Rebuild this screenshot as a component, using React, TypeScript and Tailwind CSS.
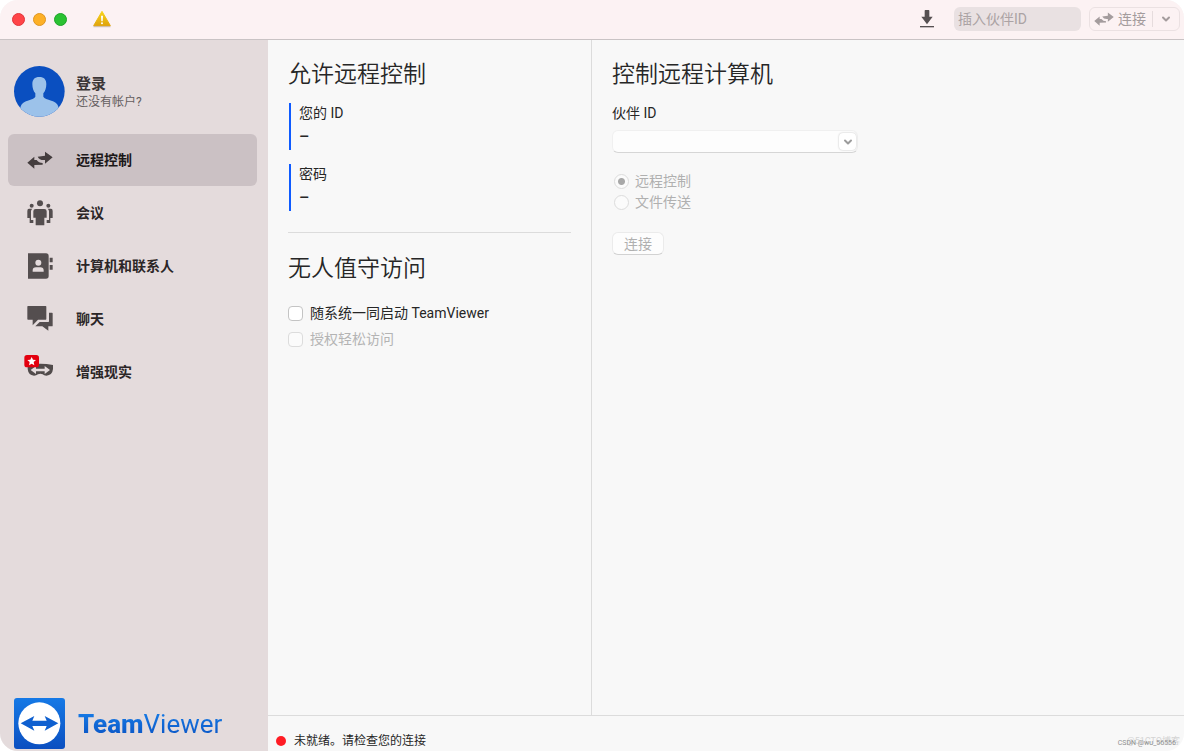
// Main window of the remote control client: title bar with quick connect,
// navigation sidebar, the two control panels and the status line.

import { useState } from 'react';
import type { ReactNode } from 'react';
import { ChevronDown } from 'lucide-react';

function ArrowsIcon({ className }: { className?: string }) {
  return (
    <svg viewBox="0 0 78 54" fill="currentColor" className={className} aria-hidden="true">
      <path d="M1 35 22 17v10h7q6 9 18 9v5l-25 1v11z" />
      <path d="M77 19 54 2v12l-22 3q6 12 22 10v11z" />
    </svg>
  );
}

function MeetingIcon() {
  return (
    <svg viewBox="0 0 78 78" fill="currentColor" className="size-6.5" aria-hidden="true">
      <circle cx="39" cy="10" r="9" />
      <circle cx="14" cy="17" r="6" />
      <circle cx="64" cy="17" r="6" />
      <path d="M26 27h26q7 0 7 7v19h-7v21q0 2-2 2H28q-2 0-2-2V53h-7V34q0-7 7-7z" />
      <path d="M6 26h10q-4 3-4 8v26h7v9H8V54H1V33q0-7 5-7zM72 26H62q4 3 4 8v26h-7v9h11V54h7V33q0-7-5-7z" />
    </svg>
  );
}

function ContactsIcon() {
  return (
    <svg viewBox="0 0 78 78" fill="currentColor" className="size-6.5" aria-hidden="true">
      <path
        fillRule="evenodd"
        d="M3 1h54q8 0 8 8v60q0 8-8 8H3zM34 20a9 9 0 1 0 0 18 9 9 0 1 0 0-18zM17 56h33v-4q0-9-10-9H27q-10 0-10 9z"
      />
      <path d="M68 14h9v14h-9zM68 36h9v14h-9z" />
    </svg>
  );
}

function ChatIcon() {
  return (
    <svg viewBox="0 0 78 78" fill="currentColor" className="size-6.5" aria-hidden="true">
      <path d="M3 0h53q2 0 2 2v37q0 2-2 2H33L17 58V41H3q-2 0-2-2V2q0-2 2-2z" />
      <path d="M66 20h9q2 0 2 2v37q0 2-2 2H64v13L46 61H25l13-13h26q2 0 2-2z" />
    </svg>
  );
}

// Goggles sit high in the row, so the view box leaves room below them.
function RealityIcon() {
  return (
    <svg viewBox="0 0 90 108" className="-ml-1 h-9 w-7.5 shrink-0" aria-hidden="true">
      <path
        d="M14 33q38-7 76 0v12q-2 19-20 20-7 0-11-4-7-4-14 0-5 4-12 4-17-1-19-20z"
        fill="#514b4b"
      />
      <path d="M23 48 39 36v8h26v-8l16 12-16 12v-8H39v8z" fill="#e4dbdc" />
      <rect x="4" y="3" width="44" height="37" rx="8" fill="#e3000f" />
      <path d="m26 9 4 8 9 1-7 6 2 10-8-5-8 5 2-10-7-6 9-1z" fill="#fff" />
    </svg>
  );
}

function WarningIcon() {
  return (
    <svg viewBox="0 0 60 54" className="h-4.5 w-5" aria-hidden="true">
      <defs>
        <linearGradient id="warn" x1="0" y1="0" x2="0" y2="1">
          <stop offset="0" stopColor="#f8d51c" />
          <stop offset="1" stopColor="#dfa30c" />
        </linearGradient>
      </defs>
      <path d="M6 50h48" stroke="#cfc4c4" strokeWidth="4" strokeLinecap="round" />
      <path d="M30 4 55 47H5z" fill="url(#warn)" stroke="url(#warn)" strokeWidth="3" strokeLinejoin="round" />
      <path d="M27 17h6l-1 17h-4z" fill="#fff" />
      <circle cx="30" cy="40" r="3" fill="#fff" />
    </svg>
  );
}

function DownloadIcon() {
  return (
    <svg viewBox="0 0 42 54" fill="#565051" className="h-4.5 w-3.5" aria-hidden="true">
      <path d="M14 2q0-2 2-2h10q2 0 2 2v18h10L21 43 4 20h10z" />
      <path d="M0 48h42v4H0z" />
    </svg>
  );
}

function Avatar() {
  return (
    <svg viewBox="0 0 153 153" className="size-[51px] shrink-0" aria-hidden="true">
      <defs>
        <clipPath id="face">
          <circle cx="76" cy="76" r="76" />
        </clipPath>
      </defs>
      <circle cx="76" cy="76" r="76" fill="#0a4fc0" />
      <g clipPath="url(#face)" fill="#9cc2ea">
        <path d="M76 33c14 0 21 8 21 21 0 13-4 22-9 28v10c3 6 12 8 24 12 14 4 21 11 23 26v23H18v-23c2-15 9-22 23-26 12-4 20-6 23-12V82c-5-6-9-15-9-28 0-13 7-21 21-21z" />
      </g>
    </svg>
  );
}

function LogoMark() {
  return (
    <svg viewBox="0 0 153 153" className="size-[51px] shrink-0" aria-hidden="true">
      <defs>
        <linearGradient id="mark" x1="0" y1="0" x2="0" y2="1">
          <stop offset="0" stopColor="#1579e6" />
          <stop offset="1" stopColor="#0b4fc0" />
        </linearGradient>
      </defs>
      <rect width="153" height="153" rx="9" fill="url(#mark)" />
      <circle cx="76" cy="76" r="63" fill="#fff" />
      <path d="M20 76 61 54l-6 14h43l-6-14 41 22-41 22 6-14H55l6 14z" fill="#0f60d0" />
    </svg>
  );
}

const NAV_ITEMS: { id: string; label: string; icon: ReactNode }[] = [
  { id: 'remote', label: '远程控制', icon: <ArrowsIcon className="h-4.5 w-6.5" /> },
  { id: 'meeting', label: '会议', icon: <MeetingIcon /> },
  { id: 'contacts', label: '计算机和联系人', icon: <ContactsIcon /> },
  { id: 'chat', label: '聊天', icon: <ChatIcon /> },
  { id: 'reality', label: '增强现实', icon: <RealityIcon /> },
];

function TitleBar() {
  return (
    <header className="flex h-10 shrink-0 items-center border-b border-[#c9c3c4] bg-[#fcf2f3] pr-1 pb-px pl-3">
      <div className="flex gap-2">
        <button aria-label="关闭" className="size-[13px] rounded-full border border-[#e0343a] bg-[#ff4548]" />
        <button aria-label="最小化" className="size-[13px] rounded-full border border-[#dd9420] bg-[#fdb026]" />
        <button aria-label="缩放" className="size-[13px] rounded-full border border-[#1da329] bg-[#2ac231]" />
      </div>
      <button aria-label="警告" className="ml-[25px]">
        <WarningIcon />
      </button>
      <button aria-label="下载" className="mr-5 ml-auto">
        <DownloadIcon />
      </button>
      <input
        aria-label="插入伙伴 ID"
        placeholder="插入伙伴ID"
        className="h-6 w-[127px] rounded-md bg-[#e9e1e2] px-1 text-sm placeholder:text-[#aba3a4]"
      />
      <div className="ml-2 flex h-6 items-center rounded-md border border-[#ebe1e2] text-[#a49c9d]">
        <button disabled className="flex items-center gap-1 pr-1.5 pl-1 text-sm">
          <ArrowsIcon className="h-3.5 w-5" />
          连接
        </button>
        <button disabled aria-label="更多连接方式" className="flex h-4 items-center border-l border-[#e6dcdd] px-[7px]">
          <ChevronDown size={12} strokeWidth={4} />
        </button>
      </div>
    </header>
  );
}

function Sidebar() {
  const [active, setActive] = useState('remote');

  return (
    <aside className="flex w-[268px] shrink-0 flex-col bg-[#e4dbdc]">
      <div className="flex items-center gap-[11px] pt-6.5 pl-3.5">
        <Avatar />
        <div className="flex flex-col">
          <a href="#login" className="text-[15px] leading-5 font-bold text-[#3b3536]">
            登录
          </a>
          <a href="#signup" className="text-xs leading-4 text-[#655e5f]">
            还没有帐户?
          </a>
        </div>
      </div>

      <nav className="mt-[17px] flex flex-col gap-px pr-[11px] pl-2">
        {NAV_ITEMS.map((item) => (
          <button
            key={item.id}
            onClick={() => setActive(item.id)}
            className={
              item.id === active
                ? 'flex h-13 items-center rounded-md bg-[#cbc1c4] pl-[19px] text-sm font-bold text-[#1b1718]'
                : 'flex h-13 items-center rounded-md pl-[19px] text-sm font-bold text-[#2b2627]'
            }
          >
            <span className={item.id === active ? 'flex w-[49px] text-[#443d3e]' : 'flex w-[49px] text-[#544e4f]'}>
              {item.icon}
            </span>
            {item.label}
          </button>
        ))}
      </nav>

      <div className="mt-auto flex items-center gap-[13px] pb-0.5 pl-3.5">
        <LogoMark />
        <span className="bg-linear-to-b from-[#1a82ec] to-[#0b4fc0] bg-clip-text font-['Roboto',sans-serif] text-[26px] leading-8 text-transparent">
          <b className="font-extrabold">Team</b>
          <span className="font-normal">Viewer</span>
        </span>
      </div>
    </aside>
  );
}

function Credential({ label, value }: { label: string; value: string }) {
  return (
    <div className="ml-px border-l-2 border-[#0f5bff] pl-2">
      <dt className="text-sm leading-5">{label}</dt>
      <dd className="text-base leading-[27px] font-medium">{value}</dd>
    </div>
  );
}

const BOX = 'size-[15px] shrink-0 appearance-none border border-[#c4c4c4] bg-white disabled:border-[#dcdcdc] disabled:bg-[#fbfbfb]';

function AllowPanel() {
  return (
    <section className="w-[324px] shrink-0 border-r border-[#dcdcdc] px-5 pt-5">
      <h2 className="text-[23px] leading-[30px] font-[350]">允许远程控制</h2>
      <dl className="mt-[13px] flex flex-col gap-3.5">
        <Credential label="您的 ID" value="–" />
        <Credential label="密码" value="–" />
      </dl>
      <hr className="mt-[21px] border-[#dcdcdc]" />
      <h2 className="mt-[21px] text-[23px] leading-[30px] font-[350]">无人值守访问</h2>
      <div className="mt-[19px] flex flex-col gap-1.5 text-sm leading-5">
        <label className="flex items-center gap-[7px]">
          <input type="checkbox" className={`${BOX} rounded-sm`} />
          随系统一同启动 TeamViewer
        </label>
        <label className="flex items-center gap-[7px] text-[#b4b4b4]">
          <input type="checkbox" disabled className={`${BOX} rounded-sm`} />
          授权轻松访问
        </label>
      </div>
    </section>
  );
}

function ControlPanel() {
  return (
    <section className="min-w-0 flex-1 px-5 pt-5">
      <h2 className="text-[23px] leading-[30px] font-[350]">控制远程计算机</h2>
      <label htmlFor="partner" className="mt-[13px] block text-sm leading-5">
        伙伴 ID
      </label>
      <div className="mt-[7px] flex h-[23px] w-[246px] items-center rounded-md border border-[#f0f0f0] border-b-[#d6d6d6] bg-[#fdfdfd] pr-px">
        <input id="partner" disabled className="h-full min-w-0 flex-1 px-2 text-sm" />
        <button
          disabled
          aria-label="显示伙伴列表"
          className="flex size-[17px] items-center justify-center rounded-sm bg-white text-[#9c9c9c] shadow-[0_0_2px_#bbbbbb]"
        >
          <ChevronDown size={12} strokeWidth={4} />
        </button>
      </div>

      <fieldset disabled className="mt-[18px] flex flex-col gap-px pl-0.5 text-sm leading-5 text-[#b0b0b0]">
        <label className="flex items-center gap-1.5">
          <input
            type="radio"
            name="mode"
            defaultChecked
            className={`${BOX} rounded-full checked:bg-[radial-gradient(circle,#a8a8a8_3px,#fbfbfb_4px)]`}
          />
          远程控制
        </label>
        <label className="flex items-center gap-1.5">
          <input type="radio" name="mode" className={`${BOX} rounded-full`} />
          文件传送
        </label>
      </fieldset>

      <button
        disabled
        className="mt-5 flex h-[23px] w-13 items-center justify-center rounded-md border border-[#ebebeb] border-b-[#d2d2d2] bg-[#fdfdfd] text-sm text-[#b0b0b0]"
      >
        连接
      </button>
    </section>
  );
}

function StatusBar() {
  return (
    <footer className="relative flex h-9 shrink-0 items-end border-t border-[#dcdcdc] pl-2">
      <span className="mb-[5px] size-2.5 rounded-full bg-[#ff1c24]" />
      <p className="ml-2 text-xs leading-5">未就绪。请检查您的连接</p>
      <span className="absolute right-1 bottom-1 text-[9px] leading-3 text-[#d4d4d4]">@51CTO博客</span>
      <span className="absolute right-2 bottom-0.5 text-[7px] leading-3 text-[#909090]">CSDN @wu_56556</span>
    </footer>
  );
}

export default function App() {
  return (
    <div className="bg-white">
      <div className="flex min-h-screen flex-col overflow-hidden rounded-[18px] bg-[#f8f8f8] font-['Roboto','Noto_Sans_CJK_SC',sans-serif] text-[#262626]">
        <TitleBar />
        <div className="flex flex-1">
          <Sidebar />
          <div className="flex min-w-0 flex-1 flex-col">
            <main className="flex flex-1">
              <AllowPanel />
              <ControlPanel />
            </main>
            <StatusBar />
          </div>
        </div>
      </div>
    </div>
  );
}
